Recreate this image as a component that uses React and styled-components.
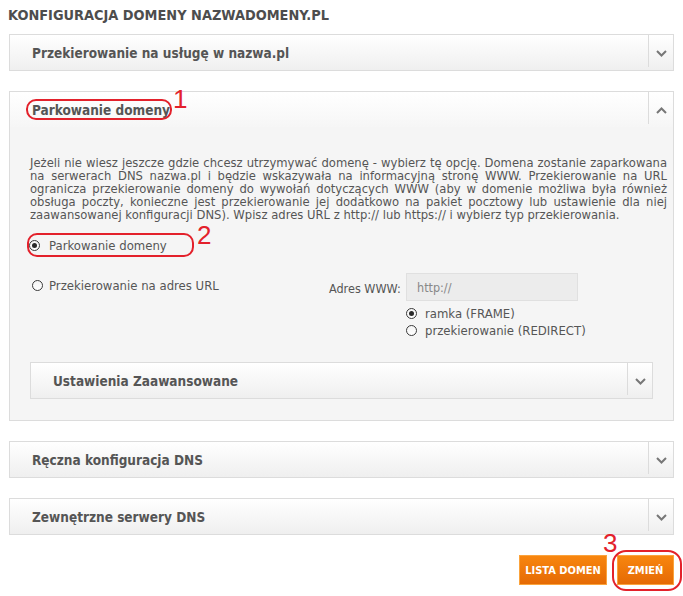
import React from "react";
import styled, { createGlobalStyle } from "styled-components";

const Global = createGlobalStyle`
  html, body { margin: 0; padding: 0; background: #fff; }
  body { font-family: "DejaVu Sans Condensed", "DejaVu Sans", sans-serif; color: #555; }
  * { box-sizing: border-box; }
`;

const Page = styled.div`
  padding: 7px 9px 10px 9px;
  width: 683px;
`;

const Title = styled.h1`
  margin: 0 0 10px -1px;
  font-size: 14.4px;
  line-height: 17px;
  font-weight: bold;
  color: #4d4d4d;
`;

const Panel = styled.section`
  border: 1px solid #dcdcdc;
  margin: ${(p) => (p.$inner ? "23px 14px 0 0" : "0 0 20px 0")};
  background: #f5f5f5;
`;

const Header = styled.div`
  height: 35px;
  display: flex;
  align-items: flex-start;
  background: linear-gradient(#ffffff, ${(p) => (p.$open ? "#f6f6f6" : "#efefef")});
`;

const HeaderTitle = styled.div`
  flex: 1;
  height: 35px;
  display: flex;
  align-items: center;
  padding-left: 22px;
  font-size: 13.5px;
  font-weight: bold;
  color: #555;
`;

const ChevronCell = styled.div`
  width: 25px;
  height: 32px;
  border-left: 1px solid #dcdcdc;
  display: flex;
  align-items: center;
  justify-content: center;
  padding-top: 4px;
`;

const Body = styled.div`
  padding: 30px 6px 21px 20px;
`;

const Para = styled.div`
  margin: 0 0 15px 0;
  font-family: "DejaVu Sans", sans-serif;
  font-size: 11.6px;
  line-height: 13px;
  color: #555;
`;

const ParaLine = styled.span`
  display: block;
  white-space: nowrap;
  text-align: ${(p) => (p.$last ? "left" : "justify")};
  text-align-last: ${(p) => (p.$last ? "left" : "justify")};
`;

const RadioRow = styled.label`
  display: flex;
  align-items: center;
  height: ${(p) => p.$h || 16}px;
  font-size: ${(p) => p.$fs || 13}px;
  color: #555;
  gap: ${(p) => p.$gap || 9}px;
  margin-left: ${(p) => p.$ml || 0}px;
`;

const Circle = styled.span`
  width: 11px;
  height: 11px;
  border-radius: 50%;
  border: 1px solid #3a3a3a;
  background: linear-gradient(#f4f4f4, #ffffff);
  display: flex;
  align-items: center;
  justify-content: center;
  flex: none;
  &::after {
    content: "";
    width: 5px;
    height: 5px;
    border-radius: 50%;
    background: #2a2a2a;
    display: ${(p) => (p.$checked ? "block" : "none")};
  }
`;

const UrlRow = styled.div`
  display: flex;
  margin-top: 20px;
`;

const UrlLeft = styled.div`
  width: 299px;
  padding-left: 2px;
  padding-top: 5px;
`;

const UrlRight = styled.div`
  display: flex;
  flex-direction: column;
`;

const AddrLine = styled.div`
  display: flex;
  align-items: center;
`;

const AddrLabel = styled.span`
  width: 77px;
  font-size: 12.5px;
  color: #555;
  padding-top: 2px;
`;

const Input = styled.div`
  width: 172px;
  height: 28px;
  background: #ececec;
  border: 1px solid #e0e0e0;
  font-size: 12.5px;
  color: #888;
  display: flex;
  align-items: center;
  padding-left: 10px;
`;

const TypeList = styled.div`
  margin: 4px 0 0 77px;
  display: flex;
  flex-direction: column;
`;

const Buttons = styled.div`
  display: flex;
  justify-content: flex-end;
  gap: 10px;
`;

const Button = styled.button`
  position: relative;
  height: 30px;
  width: ${(p) => p.$w}px;
  border: 1px solid #fba33c;
  background: linear-gradient(#f8860f, #e56a05);
  color: #fff;
  font-family: "DejaVu Sans Condensed", "DejaVu Sans", sans-serif;
  font-weight: bold;
  font-size: 11px;
  padding: 0;
  text-transform: uppercase;
`;

const Mark = styled.span`
  position: relative;
  display: ${(p) => (p.$block ? "flex" : "inline-flex")};
  width: max-content;
  align-items: center;
`;

const Ring = styled.span`
  position: absolute;
  left: ${(p) => p.$l}px;
  top: ${(p) => p.$t}px;
  width: ${(p) => p.$w}px;
  height: ${(p) => p.$h}px;
  border: 2px solid #e3212b;
  border-radius: ${(p) => p.$r || 10}px;
  pointer-events: none;
`;

const Num = styled.span`
  position: absolute;
  left: ${(p) => p.$l}px;
  top: ${(p) => p.$t}px;
  font-family: "Liberation Sans", Arial, sans-serif;
  font-weight: normal;
  font-size: 26px;
  line-height: 22px;
  color: #e3212b;
`;

const Chevron = ({ up }) => (
  <svg width="11" height="7" viewBox="0 0 11 7">
    <polyline
      points={up ? "1,6 5.5,1.5 10,6" : "1,1 5.5,5.5 10,1"}
      fill="none"
      stroke="#777"
      strokeWidth="2"
    />
  </svg>
);

const PanelHead = ({ title, open, children }) => (
  <Header $open={open}>
    <HeaderTitle>{children || title}</HeaderTitle>
    <ChevronCell>
      <Chevron up={open} />
    </ChevronCell>
  </Header>
);

const lines = [
  "Jeżeli nie wiesz jeszcze gdzie chcesz utrzymywać domenę - wybierz tę opcję. Domena zostanie zaparkowana",
  "na serwerach DNS nazwa.pl i będzie wskazywała na informacyjną stronę WWW. Przekierowanie na URL",
  "ogranicza przekierowanie domeny do wywołań dotyczących WWW (aby w domenie możliwa była również",
  "obsługa poczty, konieczne jest przekierowanie jej dodatkowo na pakiet pocztowy lub ustawienie dla niej",
  "zaawansowanej konfiguracji DNS). Wpisz adres URL z http:// lub https:// i wybierz typ przekierowania.",
];

export default function App() {
  return (
    <>
      <Global />
      <Page>
        <Title>KONFIGURACJA DOMENY NAZWADOMENY.PL</Title>

        <Panel>
          <PanelHead title="Przekierowanie na usługę w nazwa.pl" />
        </Panel>

        <Panel>
          <PanelHead open>
            <Mark>
              Parkowanie domeny
              <Ring $l={-6} $t={-3} $w={146} $h={21} />
              <Num $l={141} $t={-14}>1</Num>
            </Mark>
          </PanelHead>
          <Body>
            <Para>
              {lines.map((l, i) => (
                <ParaLine key={i} $last={i === lines.length - 1}>
                  {l}
                </ParaLine>
              ))}
            </Para>
            <Mark $block>
              <RadioRow $ml={-1} $gap={9}>
                <Circle $checked />
                Parkowanie domeny
              </RadioRow>
              <Ring $l={-3} $t={-4} $w={167} $h={24} />
              <Num $l={167} $t={-13}>2</Num>
            </Mark>
            <UrlRow>
              <UrlLeft>
                <RadioRow $h={14} $gap={6}>
                  <Circle />
                  Przekierowanie na adres URL
                </RadioRow>
              </UrlLeft>
              <UrlRight>
                <AddrLine>
                  <AddrLabel>Adres WWW:</AddrLabel>
                  <Input>http://</Input>
                </AddrLine>
                <TypeList>
                  <RadioRow $h={17} $gap={8}>
                    <Circle $checked />
                    ramka (FRAME)
                  </RadioRow>
                  <RadioRow $h={17} $gap={8}>
                    <Circle />
                    przekierowanie (REDIRECT)
                  </RadioRow>
                </TypeList>
              </UrlRight>
            </UrlRow>
            <Panel $inner>
              <PanelHead title="Ustawienia Zaawansowane" />
            </Panel>
          </Body>
        </Panel>

        <Panel>
          <PanelHead title="Ręczna konfiguracja DNS" />
        </Panel>

        <Panel>
          <PanelHead title="Zewnętrzne serwery DNS" />
        </Panel>

        <Buttons>
          <Button $w={88}>Lista domen</Button>
          <Button $w={57}>
            Zmień
            <Ring $l={-6} $t={-6} $w={70} $h={41} $r={14} />
            <Num $l={-15} $t={-24}>3</Num>
          </Button>
        </Buttons>
      </Page>
    </>
  );
}
